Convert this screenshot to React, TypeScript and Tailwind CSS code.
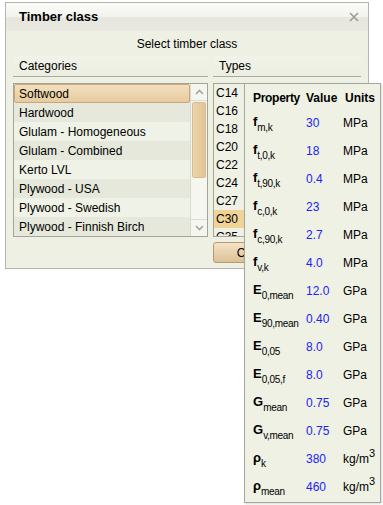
const categories = [
  "Softwood",
  "Hardwood",
  "Glulam - Homogeneous",
  "Glulam - Combined",
  "Kerto LVL",
  "Plywood - USA",
  "Plywood - Swedish",
  "Plywood - Finnish Birch",
];

const types = ["C14", "C16", "C18", "C20", "C22", "C24", "C27", "C30", "C35"];

type Prop = { sym: string; sub: string; value: string; unit: string; cube?: boolean };

const props: Prop[] = [
  { sym: "f", sub: "m,k", value: "30", unit: "MPa" },
  { sym: "f", sub: "t,0,k", value: "18", unit: "MPa" },
  { sym: "f", sub: "t,90,k", value: "0.4", unit: "MPa" },
  { sym: "f", sub: "c,0,k", value: "23", unit: "MPa" },
  { sym: "f", sub: "c,90,k", value: "2.7", unit: "MPa" },
  { sym: "f", sub: "v,k", value: "4.0", unit: "MPa" },
  { sym: "E", sub: "0,mean", value: "12.0", unit: "GPa" },
  { sym: "E", sub: "90,mean", value: "0.40", unit: "GPa" },
  { sym: "E", sub: "0,05", value: "8.0", unit: "GPa" },
  { sym: "E", sub: "0,05,f", value: "8.0", unit: "GPa" },
  { sym: "G", sub: "mean", value: "0.75", unit: "GPa" },
  { sym: "G", sub: "v,mean", value: "0.75", unit: "GPa" },
  { sym: "ρ", sub: "k", value: "380", unit: "kg/m", cube: true },
  { sym: "ρ", sub: "mean", value: "460", unit: "kg/m", cube: true },
];

const Chevron = ({ up }: { up?: boolean }) => (
  <svg width="9" height="6" viewBox="0 0 9 6">
    <path
      d={up ? "M1 5 L4.5 1.5 L8 5" : "M1 1 L4.5 4.5 L8 1"}
      fill="none"
      stroke="#a4a69c"
      strokeWidth="1.6"
    />
  </svg>
);

const ColumnHeader = ({ label }: { label: string }) => (
  <div className="h-[21px] flex items-center pl-[6px] border-b border-[#a9ab9f] bg-[linear-gradient(to_bottom,#f1f3e9,#eceee2)] text-[12px] text-black">
    {label}
  </div>
);

const App = () => {
  return (
    <div className="relative w-[383px] h-[505px] bg-white pt-[2px] pl-[5px] font-['Liberation_Sans',Arial,sans-serif] text-black">
      {/* dialog window */}
      <div className="w-[364px] h-[267px] border border-[#b3b4ab] bg-[#eef0e4] flex flex-col">
        <div className="h-[28px] flex items-center justify-between pl-[13px] pr-[9px] bg-[linear-gradient(to_bottom,#fbfbf8_0%,#f3f3ee_50%,#e6e6de_52%,#e9e9e1_100%)]">
          <span className="text-[13px] font-bold">Timber class</span>
          <svg width="10" height="10" viewBox="0 0 10 10">
            <path d="M1 1 L9 9 M9 1 L1 9" stroke="#9a9a94" strokeWidth="1.5" />
          </svg>
        </div>

        <div className="h-[25px] flex items-center justify-center text-[12px]">Select timber class</div>

        <div className="flex gap-[5px] px-[7px]">
          {/* categories */}
          <div className="w-[195px] flex flex-col">
            <ColumnHeader label="Categories" />
            <div className="mt-[6px] h-[154px] border border-[#a3a59b] flex">
              <div className="flex-1 flex flex-col">
                {categories.map((c, i) => (
                  <div
                    key={c}
                    className={
                      i === 0
                        ? "h-[19px] flex items-center pl-[4px] text-[12px] border border-[#c9a77a] rounded-[2px] bg-[linear-gradient(to_bottom,#f3dfbf,#e7cb9f)]"
                        : i % 2 === 1
                        ? "h-[19px] flex items-center pl-[5px] text-[12px] bg-[#e5e8db]"
                        : "h-[19px] flex items-center pl-[5px] text-[12px] bg-[#eff2e6]"
                    }
                  >
                    {c}
                  </div>
                ))}
              </div>
              <div className="w-[17px] flex flex-col bg-[#f5f6f0] border-l border-[#d8dacf]">
                <div className="h-[17px] flex items-center justify-center border-b border-[#dcdcd4]">
                  <Chevron up />
                </div>
                <div className="mt-[1px] h-[76px] mx-[1px] rounded-[2px] border border-[#d9bd8f] bg-[linear-gradient(to_right,#ecd3a9,#e2c595)]" />
                <div className="flex-1" />
                <div className="h-[17px] flex items-center justify-center border-t border-[#dcdcd4]">
                  <Chevron />
                </div>
              </div>
            </div>
          </div>

          {/* types */}
          <div className="w-[148px] flex flex-col">
            <ColumnHeader label="Types" />
            <div className="mt-[6px] h-[154px] border border-[#a3a59b] bg-[#eff1e5] overflow-hidden">
              {types.map((t) => (
                <div
                  key={t}
                  className={
                    t === "C30"
                      ? "h-[18px] flex items-center pl-[2px] text-[12px] bg-[#f0d396]"
                      : "h-[18px] flex items-center pl-[2px] text-[12px]"
                  }
                >
                  {t}
                </div>
              ))}
            </div>
            <button className="mt-[5px] w-[78px] h-[21px] rounded-[3px] border border-[#b99a6c] bg-[linear-gradient(to_bottom,#f4e3c6,#dcc197)] text-[12px] text-black">
              Close
            </button>
          </div>
        </div>
      </div>

      {/* property popup */}
      <div className="absolute left-[244px] top-[83px] w-[137px] h-[420px] border border-[#a5a79d] bg-[#eef1e4] pl-[8px] pt-[3px] shadow-[1px_1px_2px_rgba(0,0,0,0.15)]">
        <div className="h-[22px] flex items-center text-[12px] font-bold">
          <span className="w-[53px] tracking-[-0.3px]">Property</span>
          <span className="w-[38px]">Value</span>
          <span className="pl-[1px]">Units</span>
        </div>
        {props.map((p, i) => (
          <div key={i} className="h-[28px] flex items-center text-[12px]">
            <span className="w-[53px] whitespace-nowrap relative -top-[2px] leading-none">
              <span className="font-bold text-[13px]">{p.sym}</span>
              <span className="text-[10px] tracking-[-0.3px] relative top-[5px]">{p.sub}</span>
            </span>
            <span className="w-[37px] text-[#2323f5]">{p.value}</span>
            <span>
              {p.unit}
              {p.cube && <span className="text-[11px] relative -top-[6px]">3</span>}
            </span>
          </div>
        ))}
      </div>
    </div>
  );
};

export default App;
